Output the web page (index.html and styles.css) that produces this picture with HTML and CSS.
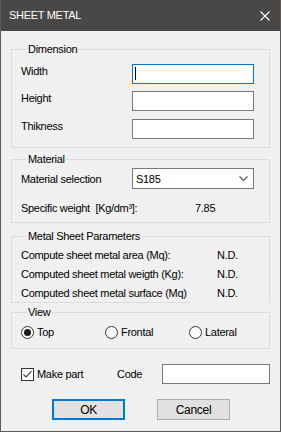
FILE: index.html
```html
<!DOCTYPE html>
<html>
<head>
<meta charset="utf-8">
<link rel="stylesheet" href="styles.css">
</head>
<body>
<div class="window">
  <div class="titlebar">
    <span class="title">SHEET METAL</span>
    <svg class="close" width="10" height="10" viewBox="0 0 10 10"><path d="M0.5 0.5 L9.5 9.5 M9.5 0.5 L0.5 9.5" stroke="#fff" stroke-width="1.1" fill="none"/></svg>
  </div>
  <div class="content">
    <fieldset class="group dim">
      <legend>Dimension</legend>
      <div class="row"><span class="lbl">Width</span><div class="field focus"><span class="caret"></span></div></div>
      <div class="row"><span class="lbl">Height</span><div class="field"></div></div>
      <div class="row row-last"><span class="lbl">Thikness</span><div class="field"></div></div>
    </fieldset>

    <fieldset class="group mat">
      <legend>Material</legend>
      <div class="row row-center"><span class="lbl">Material selection</span>
        <div class="select"><span>S185</span><svg width="9" height="6" viewBox="0 0 9 6"><path d="M0.5 0.5 L4.5 4.5 L8.5 0.5" stroke="#555" stroke-width="1.1" fill="none"/></svg></div>
      </div>
      <div class="spec"><span class="spec-lbl">Specific weight&nbsp; [Kg/dm³]:</span><span>7.85</span></div>
    </fieldset>

    <fieldset class="group params">
      <legend>Metal Sheet Parameters</legend>
      <div class="param-grid">
        <span>Compute sheet metal area (Mq):</span><span>N.D.</span>
        <span>Computed sheet metal weigth (Kg):</span><span>N.D.</span>
        <span>Computed sheet metal surface (Mq)</span><span>N.D.</span>
      </div>
    </fieldset>

    <fieldset class="group view">
      <legend>View</legend>
      <div class="radios">
        <div class="radio"><svg width="13" height="13" viewBox="0 0 13 13"><circle cx="6.5" cy="6.5" r="6" fill="#fff" stroke="#333"/><circle cx="6.5" cy="6.5" r="3.5" fill="#1a1a1a"/></svg><span>Top</span></div>
        <div class="radio"><svg width="13" height="13" viewBox="0 0 13 13"><circle cx="6.5" cy="6.5" r="6" fill="#fff" stroke="#333"/></svg><span>Frontal</span></div>
        <div class="radio"><svg width="13" height="13" viewBox="0 0 13 13"><circle cx="6.5" cy="6.5" r="6" fill="#fff" stroke="#333"/></svg><span>Lateral</span></div>
      </div>
    </fieldset>

    <div class="part-row">
      <div class="check"><svg width="13" height="13" viewBox="0 0 13 13"><rect x="0.5" y="0.5" width="12" height="12" fill="#fff" stroke="#333"/><path d="M2.5 6.5 L5 9 L10.5 3.2" stroke="#444" stroke-width="1.2" fill="none"/></svg><span>Make part</span></div>
      <span class="code-lbl">Code</span>
      <div class="field code"></div>
    </div>

    <div class="buttons">
      <div class="btn default">OK</div>
      <div class="btn">Cancel</div>
    </div>
  </div>
</div>
</body>
</html>
```
FILE: styles.css
```css
* { box-sizing: border-box; }
body {
  margin: 0;
  font-family: "Liberation Sans", Arial, sans-serif;
  font-size: 11px;
  letter-spacing: -0.3px;
  color: #000;
  background: #f0f0f0;
}
.window {
  width: 281px;
  height: 432px;
  background: #f0f0f0;
  border: 1px solid #5a5a5a;
  border-top: 0;
  display: flex;
  flex-direction: column;
}
.titlebar {
  height: 31px;
  flex: none;
  background: #4a4846;
  color: #fff;
  display: flex;
  align-items: center;
  justify-content: space-between;
  padding: 0 10px 0 8px;
  line-height: 31px;
}
.close { display: block; }
.content { padding: 11px 10px 0; }

.group {
  margin: 0;
  padding: 0;
  border: 1px solid #dcdcdc;
  min-width: 0;
  position: relative;
}
.group legend {
  margin-left: 6px;
  padding: 0 1px;
  line-height: 15px;
}

.dim { padding: 7px 0 8px 9px; }
.row { display: flex; align-items: flex-start; margin-top: 7px; line-height: 14px; }
.dim .row:first-of-type { margin-top: 0; }
.row-last { margin-top: 8px; }
.lbl { width: 111px; flex: none; }
.field {
  width: 122px;
  height: 20px;
  background: #fff;
  border: 1px solid #7a7a7a;
  position: relative;
}
.field.focus { border-color: #0078d7; }
.caret {
  display: block;
  width: 1px;
  height: 13px;
  margin: 2px 0 0 2px;
  background: #000;
}

.mat { margin-top: 4px; padding: 1px 0 7px 9px; }
.mat .row { margin-top: 0; }
.row-center { align-items: center; }
.select {
  width: 122px;
  height: 21px;
  background: #fff;
  border: 1px solid #7a7a7a;
  display: flex;
  align-items: center;
  justify-content: space-between;
  padding: 0 5px 0 3px;
}
.select svg { display: block; margin-top: 1px; }
.spec { display: flex; margin-top: 12px; line-height: 14px; }
.spec-lbl { width: 174px; flex: none; }

.params { margin-top: 6px; padding: 4px 0 2px 9px; }
.params::after {
  content: "";
  position: absolute;
  left: 177px;
  bottom: -1px;
  width: 80px;
  height: 1px;
  background: #f0f0f0;
}
.param-grid {
  display: grid;
  grid-template-columns: 196px auto;
  row-gap: 5px;
  line-height: 14px;
}

.view { margin-top: 2px; padding: 5px 0 9px 9px; }
.radios {
  display: grid;
  grid-template-columns: 84px 84px 84px;
  height: 14px;
  line-height: 14px;
}
.radio { display: flex; align-items: center; gap: 3px; }
.radio svg, .check svg { display: block; flex: none; }

.part-row {
  display: flex;
  align-items: center;
  margin-top: 15px;
  padding-left: 10px;
  height: 20px;
}
.check { display: flex; align-items: center; gap: 3px; width: 96px; }
.code-lbl { width: 45px; }
.field.code { width: 108px; }

.buttons {
  display: flex;
  gap: 32px;
  margin-top: 15px;
  padding-left: 41px;
}
.btn {
  width: 73px;
  height: 21px;
  background: #e1e1e1;
  border: 1px solid #adadad;
  display: flex;
  align-items: center;
  justify-content: center;
  font-size: 12px;
}
.btn.default { border: 2px solid #0078d7; }
```
